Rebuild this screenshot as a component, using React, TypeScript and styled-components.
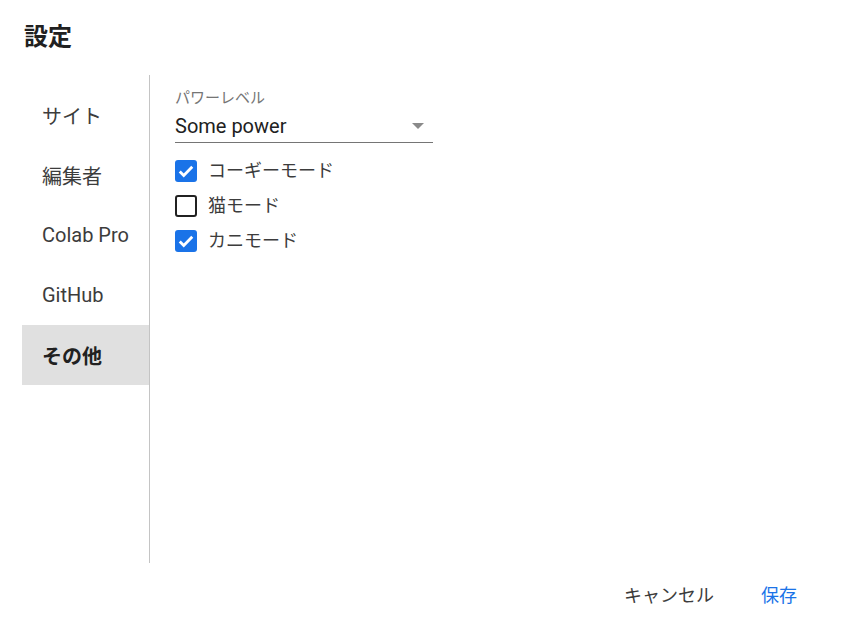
import React, { useState } from 'react';
import styled, { createGlobalStyle } from 'styled-components';

const GlobalStyle = createGlobalStyle`
  html, body {
    margin: 0;
    padding: 0;
    background: #ffffff;
  }
  body {
    font-family: Roboto, "Noto Sans CJK JP", sans-serif;
    color: #212121;
  }
`;

const Dialog = styled.div`
  width: 855px;
  height: 625px;
  box-sizing: border-box;
  display: flex;
  flex-direction: column;
  padding: 22px 0 0 22px;
`;

const Title = styled.h1`
  margin: 0 0 0 2px;
  font-size: 24px;
  font-weight: 700;
  line-height: 30px;
  color: #212121;
`;

const Body = styled.div`
  display: flex;
  margin-top: 23px;
  height: 488px;
`;

const Sidebar = styled.nav`
  width: 127px;
  display: flex;
  flex-direction: column;
  padding-top: 10px;
  border-right: 1px solid #c4c4c4;
`;

const NavItem = styled.div<{ $active?: boolean }>`
  height: 60px;
  display: flex;
  align-items: center;
  padding-left: 20px;
  font-size: 20px;
  font-weight: ${(p) => (p.$active ? 700 : 400)};
  color: ${(p) => (p.$active ? '#212121' : '#3c3c3c')};
  background: ${(p) => (p.$active ? '#e0e0e0' : 'transparent')};
  cursor: pointer;
`;

const Content = styled.div`
  flex: 1;
  padding: 14px 0 0 25px;
  display: flex;
  flex-direction: column;
`;

const Field = styled.div`
  width: 258px;
`;

const FieldLabel = styled.div`
  font-size: 15px;
  line-height: 18px;
  color: #757575;
`;

const SelectBox = styled.div`
  display: flex;
  align-items: center;
  justify-content: space-between;
  height: 32px;
  padding-top: 3px;
  border-bottom: 1px solid #757575;
  font-size: 20px;
  color: #212121;
`;

const Arrow = styled.span`
  width: 0;
  height: 0;
  border-left: 6px solid transparent;
  border-right: 6px solid transparent;
  border-top: 6px solid #8a8a8a;
  margin-right: 9px;
`;

const Options = styled.div`
  display: flex;
  flex-direction: column;
  margin-top: 17px;
  gap: 13px;
`;

const OptionRow = styled.label`
  display: flex;
  align-items: center;
  gap: 11px;
  font-size: 18px;
  line-height: 22px;
  color: #3c3c3c;
  cursor: pointer;
`;

const Box = styled.span<{ $checked: boolean }>`
  width: 22px;
  height: 22px;
  box-sizing: border-box;
  border-radius: 3px;
  display: flex;
  align-items: center;
  justify-content: center;
  background: ${(p) => (p.$checked ? '#1a73e8' : '#ffffff')};
  border: ${(p) => (p.$checked ? 'none' : '2px solid #212121')};
`;

const Footer = styled.div`
  display: flex;
  justify-content: flex-end;
  align-items: center;
  gap: 23px;
  padding: 14px 46px 0 0;
`;

const TextButton = styled.button<{ $primary?: boolean }>`
  background: none;
  border: none;
  font-family: Roboto, "Noto Sans CJK JP", sans-serif;
  font-size: 18px;
  padding: 4px 12px;
  color: ${(p) => (p.$primary ? '#1a73e8' : '#3c3c3c')};
  cursor: pointer;
`;

const navItems = ['サイト', '編集者', 'Colab Pro', 'GitHub', 'その他'];

function Checkbox({ label, initial }: { label: string; initial: boolean }) {
  const [checked, setChecked] = useState(initial);
  return (
    <OptionRow onClick={() => setChecked(!checked)}>
      <Box $checked={checked}>
        {checked && (
          <svg width="20" height="20" viewBox="0 0 24 24">
            <path d="M4.5 12.5l4.8 4.8L19.5 7" fill="none" stroke="#ffffff" strokeWidth="3.4" />
          </svg>
        )}
      </Box>
      {label}
    </OptionRow>
  );
}

export default function App() {
  return (
    <>
      <GlobalStyle />
      <Dialog>
        <Title>設定</Title>
        <Body>
          <Sidebar>
            {navItems.map((item) => (
              <NavItem key={item} $active={item === 'その他'}>
                {item}
              </NavItem>
            ))}
          </Sidebar>
          <Content>
            <Field>
              <FieldLabel>パワーレベル</FieldLabel>
              <SelectBox>
                Some power
                <Arrow />
              </SelectBox>
            </Field>
            <Options>
              <Checkbox label="コーギーモード" initial />
              <Checkbox label="猫モード" initial={false} />
              <Checkbox label="カニモード" initial />
            </Options>
          </Content>
        </Body>
        <Footer>
          <TextButton>キャンセル</TextButton>
          <TextButton $primary>保存</TextButton>
        </Footer>
      </Dialog>
    </>
  );
}
